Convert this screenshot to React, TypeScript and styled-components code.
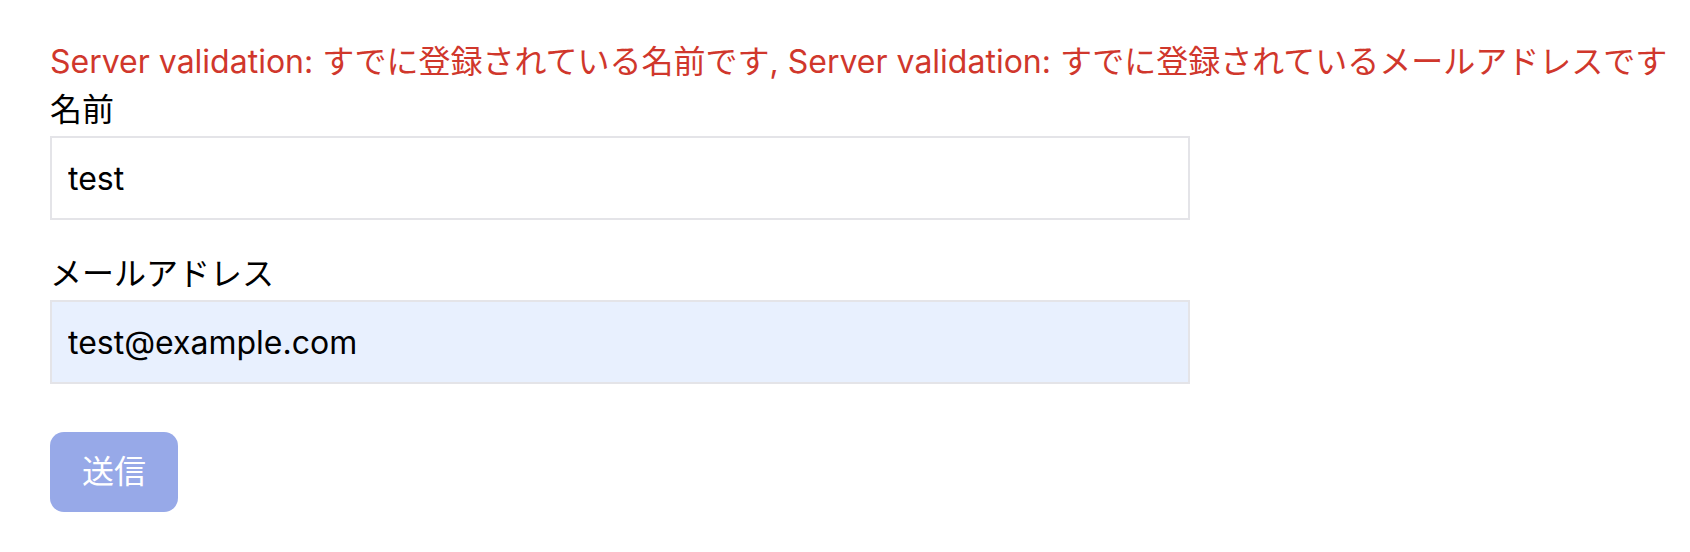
import React from "react";
import styled, { createGlobalStyle } from "styled-components";

const GlobalStyle = createGlobalStyle`
  html, body {
    margin: 0;
    padding: 0;
    background: #ffffff;
  }
  body {
    font-family: Inter, "Noto Sans CJK JP", sans-serif;
    font-size: 32px;
    line-height: 1.5;
    color: #000000;
  }
  * { box-sizing: border-box; }
`;

const Page = styled.main`
  padding: 38px 50px 0 50px;
`;

const Form = styled.form`
  display: flex;
  flex-direction: column;
  width: 1140px;
`;

const ErrorText = styled.p`
  margin: 0;
  color: #d0372c;
  white-space: nowrap;
  font-size: 32px;
  line-height: 48px;
`;

const Field = styled.div`
  display: flex;
  flex-direction: column;
  gap: 2px;
  margin-bottom: 30px;
`;

const Label = styled.label`
  display: block;
  font-size: 32px;
  line-height: 48px;
  color: #000000;
`;

const Input = styled.input<{ $autofilled?: boolean }>`
  display: block;
  width: 100%;
  height: 84px;
  padding: 16px;
  border: 2px solid #e4e4e8;
  border-radius: 0;
  background: ${(p) => (p.$autofilled ? "#e8f0fe" : "#ffffff")};
  font-family: Inter, "Noto Sans CJK JP", sans-serif;
  font-size: 32px;
  line-height: 48px;
  color: #000000;
  outline: none;
`;

const SubmitButton = styled.button`
  align-self: flex-start;
  margin-top: 18px;
  height: 80px;
  padding: 0 32px;
  border: none;
  border-radius: 14px;
  background: #97a9e8;
  color: #ffffff;
  font-family: Inter, "Noto Sans CJK JP", sans-serif;
  font-size: 32px;
  line-height: 48px;
  cursor: default;
`;

export default function App() {
  return (
    <>
      <GlobalStyle />
      <Page>
        <Form onSubmit={(e) => e.preventDefault()}>
          <ErrorText>
            Server validation: すでに登録されている名前です, Server validation: すでに登録されているメールアドレスです
          </ErrorText>
          <Field>
            <Label htmlFor="name">名前</Label>
            <Input id="name" type="text" defaultValue="test" readOnly />
          </Field>
          <Field>
            <Label htmlFor="email">メールアドレス</Label>
            <Input id="email" type="email" defaultValue="test@example.com" readOnly $autofilled />
          </Field>
          <SubmitButton type="submit" disabled>
            送信
          </SubmitButton>
        </Form>
      </Page>
    </>
  );
}
